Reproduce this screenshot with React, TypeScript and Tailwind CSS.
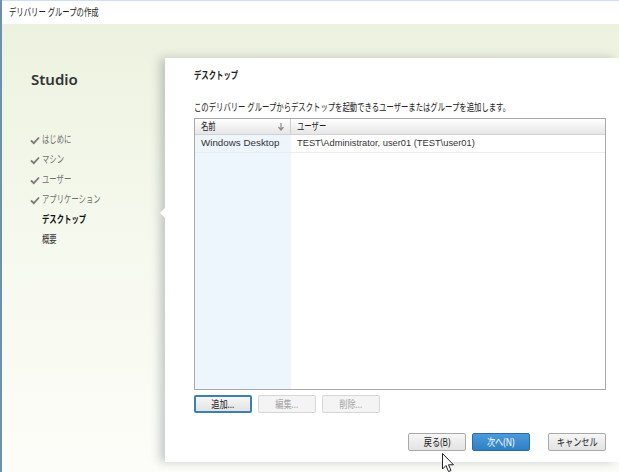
import React from "react";

const font = "font-['Noto_Sans','Noto_Sans_CJK_JP',sans-serif]";
const latin = "font-['Liberation_Sans','Noto_Sans',sans-serif]";

const steps = [
  { label: "はじめに", done: true },
  { label: "マシン", done: true },
  { label: "ユーザー", done: true },
  { label: "アプリケーション", done: true },
  { label: "デスクトップ", current: true },
  { label: "概要" },
];

// Japanese UI font in the shot is narrow (Meiryo UI), squeeze Noto CJK to match
function J({ children, center = false, className = "" }: { children: React.ReactNode; center?: boolean; className?: string }) {
  return (
    <span className={`inline-block whitespace-nowrap ${center ? "origin-center scale-x-[0.78]" : "origin-left scale-x-[0.7]"} ${className}`}>
      {children}
    </span>
  );
}

function Check() {
  return (
    <svg width="10" height="9" viewBox="0 0 10 9" className="shrink-0">
      <path d="M1 4.5 L3.8 7.2 L9 1.5" fill="none" stroke="#7a7a7a" strokeWidth="1.8" />
    </svg>
  );
}

function Btn({ children, variant = "normal", className = "" }: { children: React.ReactNode; variant?: string; className?: string }) {
  const styles =
    variant === "primary"
      ? "bg-linear-to-b from-[#4c9ad9] to-[#2f7fc4] border-[#2a6aa6] text-white"
      : variant === "disabled"
      ? "bg-[#f4f4f4] border-[#d6d6d6] text-[#a3a3a3]"
      : variant === "focus"
      ? "bg-linear-to-b from-[#f6f6f6] to-[#e3e3e3] border-[#3c7fb1] border-2 text-[#222]"
      : "bg-linear-to-b from-[#f6f6f6] to-[#e3e3e3] border-[#a9a9a9] text-[#222]";
  return (
    <div className={`w-[58px] h-[18px] shrink-0 border rounded-[2px] flex items-center justify-center text-[10.5px] leading-none ${styles} ${className}`}>
      <J center>{children}</J>
    </div>
  );
}

export default function App() {
  return (
    <div className={`w-[619px] h-[472px] relative overflow-hidden flex flex-col border-l-2 border-[#6f8fae] ${font}`}>
      <div className="h-[24px] shrink-0 bg-white border-t border-[#cfe0f2] flex items-center pl-[7px] text-[10.5px] text-[#222]">
        <J>デリバリー グループの作成</J>
      </div>
      <div className="flex-1 flex bg-linear-to-b from-[#ecf2df] via-[#f6f9ee] to-[#fcfdf8]">
        <div className="w-[163px] shrink-0 flex flex-col">
          <div className="pl-[29px] pt-[46px] text-[15px] font-semibold text-[#333] leading-[18px]">Studio</div>
          <div className="pl-[28px] pt-[42px] flex flex-col">
            {steps.map((s) => (
              <div key={s.label} className="h-[20px] flex items-center gap-[1px] text-[10.5px]">
                <div className="w-[11px] flex justify-start">{s.done && <Check />}</div>
                <J className={s.current ? "font-bold text-[#111]" : s.done ? "text-[#6f6f6f]" : "text-[#333]"}>
                  {s.label}
                </J>
              </div>
            ))}
          </div>
        </div>
        <div className="flex-1 min-w-0 flex flex-col">
          <div className="h-[34px] shrink-0" />
          <div className="relative min-w-0 h-[404px] bg-white shadow-[-5px_0_9px_rgba(80,90,100,0.3)] flex flex-col pl-[29px] pr-[13px] pt-[10px]">
            <div className="absolute left-[-5px] top-[150px] w-0 h-0 border-y-[5px] border-y-transparent border-r-[5px] border-r-white" />
            <div className="h-[14px] min-w-0 leading-[14px] text-[10.5px] font-semibold text-[#222]">
              <J>デスクトップ</J>
            </div>
            <div className="mt-[18px] min-w-0 h-[14px] leading-[14px] text-[10.5px] text-[#222]">
              <J>このデリバリー グループからデスクトップを起動できるユーザーまたはグループを追加します。</J>
            </div>
            <div className="mt-[4px] h-[272px] border border-[#a9a9a9] flex flex-col bg-white relative">
              <div className="absolute left-0 top-0 bottom-0 w-[96px] bg-[#edf5fd]" />
              <div className="relative h-[16px] flex bg-linear-to-b from-[#ffffff] to-[#e6e6e6] border-b border-[#d2d2d2] text-[10.5px] text-[#222]">
                <div className="w-[96px] flex items-center justify-between pl-[6px] pr-[6px] border-r border-[#cfcfcf]">
                  <J>名前</J>
                  <svg width="6" height="8" viewBox="0 0 6 8">
                    <path d="M3 0 V6 M0.5 4 L3 7 L5.5 4" fill="none" stroke="#8a8a8a" strokeWidth="1.2" />
                  </svg>
                </div>
                <div className="flex items-center pl-[6px]">
                  <J>ユーザー</J>
                </div>
              </div>
              <div className={`relative h-[18px] flex border-b border-[#ececec] text-[#333] ${latin}`}>
                <div className="w-[96px] flex items-center pl-[6px] text-[9.8px]">Windows Desktop</div>
                <div className="flex items-center pl-[6px] text-[9.3px]">TEST\Administrator, user01 (TEST\user01)</div>
              </div>
            </div>
            <div className="mt-[5px] flex gap-[6px]">
              <Btn variant="focus">追加...</Btn>
              <Btn variant="disabled">編集...</Btn>
              <Btn variant="disabled">削除...</Btn>
            </div>
            <div className="mt-[20px] flex justify-end">
              <Btn>戻る(B)</Btn>
              <Btn variant="primary" className="ml-[6px]">次へ(N)</Btn>
              <Btn className="ml-[18px]">キャンセル</Btn>
            </div>
          </div>
        </div>
      </div>
      <svg className="absolute left-[440px] top-[453px]" width="13" height="20" viewBox="0 0 13 20">
        <path d="M0.5 0.5 L0.5 16 L4 12.5 L6.5 18.5 L9 17.5 L6.5 11.8 L11.5 11.8 Z" fill="white" stroke="#222" strokeWidth="1" />
      </svg>
    </div>
  );
}
